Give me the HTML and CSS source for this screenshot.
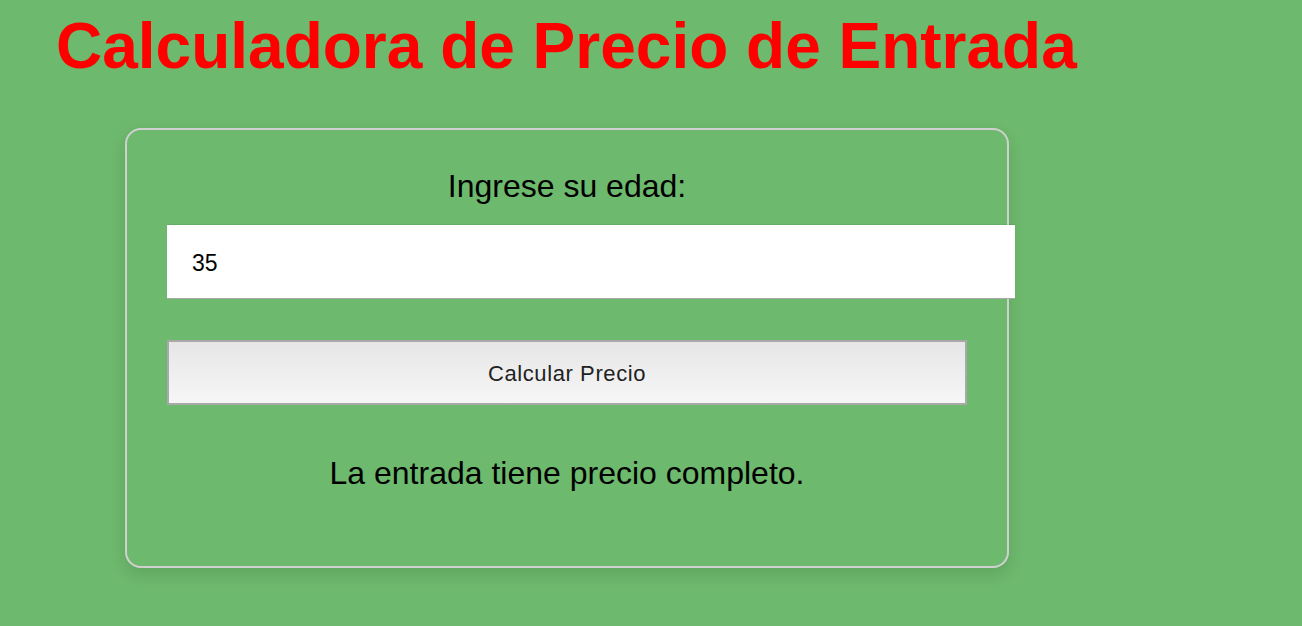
FILE: index.html
```html
<!DOCTYPE html>
<html lang="es">
<head>
<meta charset="utf-8">
<title>Calculadora de Precio de Entrada</title>
<link rel="stylesheet" href="styles.css">
</head>
<body>
  <h1 class="title">Calculadora de Precio de Entrada</h1>
  <div class="card">
    <label class="label" for="edad">Ingrese su edad:</label>
    <input class="age-input" id="edad" type="text" value="35">
    <button class="calc-btn" type="button">Calcular Precio</button>
    <p class="result">La entrada tiene precio completo.</p>
  </div>
</body>
</html>
```
FILE: styles.css
```css
html, body {
  margin: 0;
  padding: 0;
  background: #6db96d;
}
body {
  font-family: "Liberation Sans", Arial, sans-serif;
  padding: 10px 0 0 54px;
  min-height: 626px;
  box-sizing: border-box;
}
.title {
  margin: 0 0 0 2px;
  font-size: 64px;
  font-weight: bold;
  color: #ff0000;
  line-height: 73px;
}
.card {
  margin: 45px 0 0 71px;
  width: 800px;
  padding: 38px 40px 74px;
  border: 2px solid #d0d0d0;
  border-radius: 16px;
  box-shadow: 0 6px 16px rgba(0, 0, 0, 0.12);
  display: flex;
  flex-direction: column;
  text-align: center;
}
.label {
  display: block;
  font-size: 32px;
  line-height: 37px;
  color: #000;
  margin-bottom: 20px;
}
.age-input {
  display: block;
  width: 100%;
  box-sizing: content-box;
  height: 26px;
  line-height: 26px;
  padding: 25px 23px 22px 25px;
  margin: 0;
  border: none;
  border-bottom: 1px solid #a8a8a8;
  box-shadow: 0 -1px 0 rgba(0, 0, 0, 0.06);
  background: #fff;
  font-family: "Liberation Sans", Arial, sans-serif;
  font-size: 23px;
  color: #000;
  outline: none;
}
.calc-btn {
  display: block;
  width: 100%;
  box-sizing: border-box;
  height: 65px;
  margin: 41px 0 0;
  border: 2px solid #a9a9a9;
  background: linear-gradient(#e6e6e6, #f6f6f6);
  font-family: "Liberation Sans", Arial, sans-serif;
  font-size: 22px;
  letter-spacing: 0.6px;
  color: #222;
  padding: 2px 0 0;
}
.result {
  margin: 50px 0 0;
  font-size: 32px;
  line-height: 37px;
  color: #000;
}
```
